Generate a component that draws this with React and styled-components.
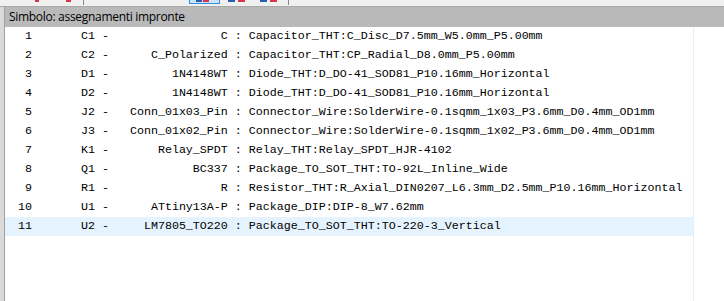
import React from 'react';
import styled, { createGlobalStyle } from 'styled-components';

const GlobalStyle = createGlobalStyle`
  html, body {
    margin: 0;
    padding: 0;
    background: #ffffff;
    overflow: hidden;
  }
`;

const components = [
  { ref: 'C1', value: 'C', footprint: 'Capacitor_THT:C_Disc_D7.5mm_W5.0mm_P5.00mm' },
  { ref: 'C2', value: 'C_Polarized', footprint: 'Capacitor_THT:CP_Radial_D8.0mm_P5.00mm' },
  { ref: 'D1', value: '1N4148WT', footprint: 'Diode_THT:D_DO-41_SOD81_P10.16mm_Horizontal' },
  { ref: 'D2', value: '1N4148WT', footprint: 'Diode_THT:D_DO-41_SOD81_P10.16mm_Horizontal' },
  { ref: 'J2', value: 'Conn_01x03_Pin', footprint: 'Connector_Wire:SolderWire-0.1sqmm_1x03_P3.6mm_D0.4mm_OD1mm' },
  { ref: 'J3', value: 'Conn_01x02_Pin', footprint: 'Connector_Wire:SolderWire-0.1sqmm_1x02_P3.6mm_D0.4mm_OD1mm' },
  { ref: 'K1', value: 'Relay_SPDT', footprint: 'Relay_THT:Relay_SPDT_HJR-4102' },
  { ref: 'Q1', value: 'BC337', footprint: 'Package_TO_SOT_THT:TO-92L_Inline_Wide' },
  { ref: 'R1', value: 'R', footprint: 'Resistor_THT:R_Axial_DIN0207_L6.3mm_D2.5mm_P10.16mm_Horizontal' },
  { ref: 'U1', value: 'ATtiny13A-P', footprint: 'Package_DIP:DIP-8_W7.62mm' },
  { ref: 'U2', value: 'LM7805_TO220', footprint: 'Package_TO_SOT_THT:TO-220-3_Vertical' },
];

// same layout as "%3d %8s - %16s : %s"
const formatLine = (index, item) => {
  const num = String(index + 1).padStart(3, ' ');
  const ref = item.ref.padStart(8, ' ');
  const value = item.value.padStart(16, ' ');
  return `${num} ${ref} - ${value} : ${item.footprint}`;
};

export default function App () {
  const selectedIndex = 10;

  return (
    <>
      <GlobalStyle />
      <Frame>
        <Toolbar>
          <ToolBit $left={35} $width={4} $color="#d8344f" />
          <ToolBit $left={27} $width={5} $color="#d8344f" />
          <ToolSeparator $left={12} />
          <SelectedTool $left={105}>
            <ToolBit $left={6} $width={6} $color="#2a5db0" />
            <ToolBit $left={1} $width={6} $color="#d8344f" />
          </SelectedTool>
          <ToolIcon $left={8}>
            <ToolBit $left={0} $width={7} $color="#2a5db0" />
            <ToolBit $left={3} $width={7} $color="#d8344f" />
          </ToolIcon>
          <ToolIcon $left={12}>
            <ToolBit $left={0} $width={7} $color="#2a5db0" />
            <ToolBit $left={3} $width={7} $color="#d8344f" />
          </ToolIcon>
          <ToolSeparator $left={8} />
        </Toolbar>
        <Body>
          <SideStrip />
          <Panel>
            <PanelHeader>Simbolo: assegnamenti impronte</PanelHeader>
            <ListArea>
              <ListColumn>
                {components.map((item, index) => (
                  <ListRow key={item.ref} $selected={index === selectedIndex}>
                    {formatLine(index, item)}
                  </ListRow>
                ))}
              </ListColumn>
              <ListRest />
            </ListArea>
          </Panel>
        </Body>
      </Frame>
    </>
  );
}

const Frame = styled('div')`
  width: 724px;
  height: 301px;
  display: flex;
  flex-direction: column;
  background: #ffffff;
`;

const Toolbar = styled('div')`
  height: 6px;
  flex: 0 0 6px;
  display: flex;
  align-items: flex-start;
  background: #f0f0f0;
  border-bottom: 1px solid #a9a9a9;
  overflow: hidden;
`;

const ToolBit = styled('div')`
  width: ${(props) => props.$width}px;
  height: 2px;
  margin-left: ${(props) => props.$left}px;
  background: ${(props) => props.$color};
  flex: 0 0 auto;
`;

const ToolSeparator = styled('div')`
  width: 1px;
  height: 5px;
  margin-left: ${(props) => props.$left}px;
  background: #8a8a8a;
  flex: 0 0 auto;
`;

const SelectedTool = styled('div')`
  display: flex;
  align-items: flex-start;
  width: 29px;
  height: 3px;
  margin-left: ${(props) => props.$left}px;
  background: #cce4f7;
  border: 1px solid #2f8ee0;
  border-top: none;
  flex: 0 0 auto;
`;

const ToolIcon = styled('div')`
  display: flex;
  align-items: flex-start;
  width: 20px;
  height: 3px;
  margin-left: ${(props) => props.$left}px;
  flex: 0 0 auto;
`;

const Body = styled('div')`
  flex: 1 1 auto;
  display: flex;
  min-height: 0;
`;

const SideStrip = styled('div')`
  width: 4px;
  flex: 0 0 4px;
  background: #dadada;
`;

const Panel = styled('div')`
  flex: 1 1 auto;
  display: flex;
  flex-direction: column;
  border-left: 1px solid #a0a0a0;
  min-width: 0;
`;

const PanelHeader = styled('div')`
  height: 20px;
  flex: 0 0 20px;
  background: #b9b9b9;
  padding-left: 4px;
  font-family: "Open Sans", "Noto Sans", sans-serif;
  font-size: 12px;
  letter-spacing: -0.3px;
  line-height: 20px;
  color: #000000;
  white-space: nowrap;
`;

const ListArea = styled('div')`
  flex: 1 1 auto;
  display: flex;
  background: #ffffff;
`;

const ListColumn = styled('div')`
  width: 688px;
  flex: 0 0 688px;
  display: flex;
  flex-direction: column;
  border-right: 1px solid #e3eefb;
`;

const ListRest = styled('div')`
  flex: 1 1 auto;
`;

const ListRow = styled('div')`
  height: 19px;
  padding-left: 6px;
  font-family: "Liberation Mono", "Courier New", monospace;
  font-size: 11.67px;
  line-height: 19px;
  color: #000000;
  white-space: pre;
  background: ${(props) => (props.$selected ? '#e5f3ff' : 'transparent')};
`;
